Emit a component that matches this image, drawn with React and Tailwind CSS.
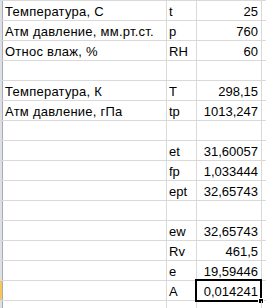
const rows = [
  ['Температура, С', 't', '25'],
  ['Атм давление, мм.рт.ст.', 'p', '760'],
  ['Относ влаж, %', 'RH', '60'],
  ['', '', ''],
  ['Температура, К', 'T', '298,15'],
  ['Атм давление, гПа', 'tp', '1013,247'],
  ['', '', ''],
  ['', 'et', '31,60057'],
  ['', 'fp', '1,033444'],
  ['', 'ept', '32,65743'],
  ['', '', ''],
  ['', 'ew', '32,65743'],
  ['', 'Rv', '461,5'],
  ['', 'e', '19,59446'],
  ['', 'A', '0,014241'],
  ['', '', ''],
];

export default function App() {
  return (
    <div
      className="w-[266px] h-[308px] overflow-hidden bg-white text-black text-[13px] leading-[20px]"
      style={{ fontFamily: '"Liberation Sans", Arial, sans-serif' }}
    >
      <div className="border-t border-[#d9d9d9]">
        {rows.map((r, i) => {
          const selected = i === 14;
          return (
            <div key={i} className="flex h-[20px] border-b border-[#d9d9d9]">
              {/* row header strip */}
              <div
                className={`w-[3px] shrink-0 border-r border-[#a8abb0] ${
                  selected ? 'bg-[#f6c85c]' : 'bg-[#dde0e4]'
                }`}
              />
              <div className="w-[164px] shrink-0 border-r border-[#d9d9d9] pl-[2px] pt-[1px] tracking-[0.25px] whitespace-nowrap">
                {r[0]}
              </div>
              <div className="w-[30px] shrink-0 border-r border-[#d9d9d9] pl-[2px] pt-[1px] whitespace-nowrap">
                {r[1]}
              </div>
              <div className="relative w-[65px] shrink-0 border-r border-[#d9d9d9] pr-[3px] pt-[1px] text-right whitespace-nowrap">
                {r[2]}
                {selected && (
                  <>
                    <div className="absolute -left-[2px] -top-[2px] -right-[1px] -bottom-[2px] border-2 border-black" />
                    <div className="absolute -right-[3px] -bottom-[4px] w-[6px] h-[6px] bg-black border border-white" />
                  </>
                )}
              </div>
              <div className="flex-1" />
            </div>
          );
        })}
      </div>
    </div>
  );
}
